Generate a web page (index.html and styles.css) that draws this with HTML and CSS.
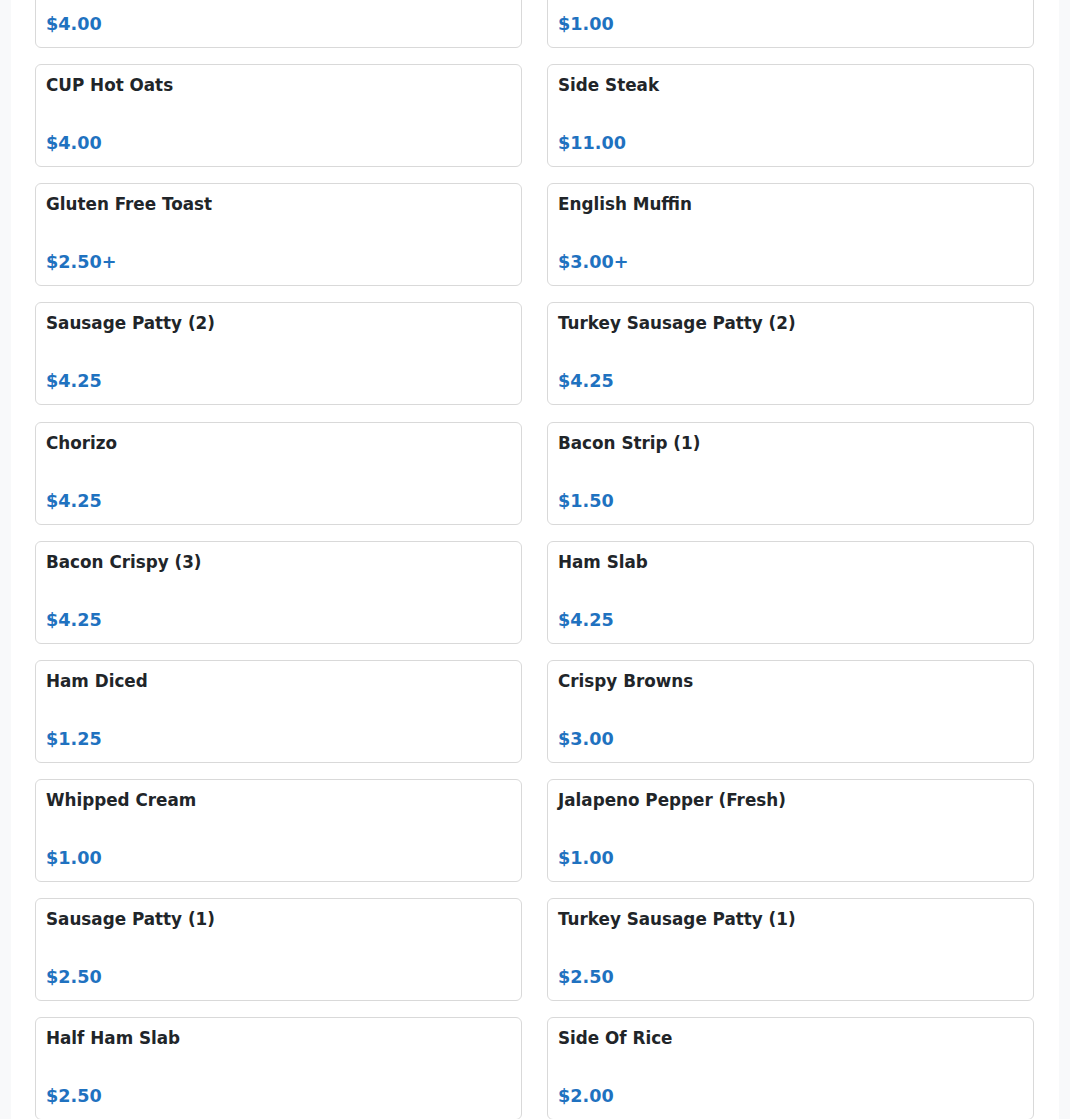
FILE: index.html
```html
<!DOCTYPE html>
<html>
<head>
<meta charset="utf-8">
<link rel="stylesheet" href="styles.css">
</head>
<body>
<div class="page">
  <div class="grid">
    <div class="card"><div class="name"></div><div class="price">$4.00</div></div>
    <div class="card"><div class="name"></div><div class="price">$1.00</div></div>
    <div class="card"><div class="name">CUP Hot Oats</div><div class="price">$4.00</div></div>
    <div class="card"><div class="name">Side Steak</div><div class="price">$11.00</div></div>
    <div class="card"><div class="name">Gluten Free Toast</div><div class="price">$2.50+</div></div>
    <div class="card"><div class="name">English Muffin</div><div class="price">$3.00+</div></div>
    <div class="card"><div class="name">Sausage Patty (2)</div><div class="price">$4.25</div></div>
    <div class="card"><div class="name">Turkey Sausage Patty (2)</div><div class="price">$4.25</div></div>
    <div class="card"><div class="name">Chorizo</div><div class="price">$4.25</div></div>
    <div class="card"><div class="name">Bacon Strip (1)</div><div class="price">$1.50</div></div>
    <div class="card"><div class="name">Bacon Crispy (3)</div><div class="price">$4.25</div></div>
    <div class="card"><div class="name">Ham Slab</div><div class="price">$4.25</div></div>
    <div class="card"><div class="name">Ham Diced</div><div class="price">$1.25</div></div>
    <div class="card"><div class="name">Crispy Browns</div><div class="price">$3.00</div></div>
    <div class="card"><div class="name">Whipped Cream</div><div class="price">$1.00</div></div>
    <div class="card"><div class="name">Jalapeno Pepper (Fresh)</div><div class="price">$1.00</div></div>
    <div class="card"><div class="name">Sausage Patty (1)</div><div class="price">$2.50</div></div>
    <div class="card"><div class="name">Turkey Sausage Patty (1)</div><div class="price">$2.50</div></div>
    <div class="card"><div class="name">Half Ham Slab</div><div class="price">$2.50</div></div>
    <div class="card"><div class="name">Side Of Rice</div><div class="price">$2.00</div></div>
  </div>
</div>
</body>
</html>
```

FILE: styles.css
```css
html, body {
  margin: 0;
  padding: 0;
  background: #f8f9fa;
  font-family: "DejaVu Sans", sans-serif;
}
.page {
  margin: 0 11px;
  background: #ffffff;
  padding: 0 25px 0 24px;
  min-height: 1119px;
  overflow: hidden;
}
.grid {
  display: grid;
  grid-template-columns: 1fr 1fr;
  column-gap: 25px;
  row-gap: 16.125px;
  margin-top: -55px;
}
.card {
  box-sizing: border-box;
  height: 103px;
  border: 1px solid #d9d9d9;
  border-radius: 6px;
  padding: 10px 10px 12px 10px;
  display: flex;
  flex-direction: column;
  justify-content: space-between;
}
.name {
  font-weight: bold;
  font-size: 16.8px;
  line-height: 20px;
  min-height: 20px;
  color: #212529;
}
.price {
  font-weight: bold;
  font-size: 17.6px;
  line-height: 22px;
  color: #1f72c0;
}
```
